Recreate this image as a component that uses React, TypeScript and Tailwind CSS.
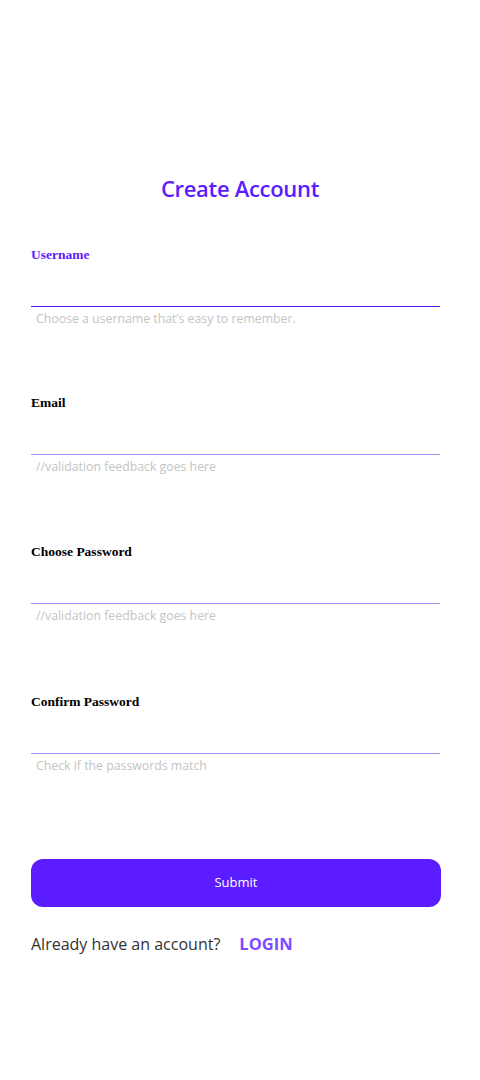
import React from 'react';

interface FieldProps {
  label: string;
  hint: string;
  active?: boolean;
  className?: string;
}

function Field({ label, hint, active, className = '' }: FieldProps) {
  return (
    <div className={`flex flex-col ${className}`}>
      <label
        className={`h-[18px] text-[13.5px] leading-[18px] font-['Liberation_Serif',serif] font-bold ${
          active ? 'text-[#5b1cff]' : 'text-black'
        }`}
      >
        {label}
      </label>
      <div className="h-[42px]" />
      <div className={`h-px w-[409px] ${active ? 'bg-[#5b1cff]' : 'bg-[#a98cf3]'}`} />
      <p className="mt-[3px] pl-[5px] text-[12.3px] leading-[18px] text-[#c4c4c4]">{hint}</p>
    </div>
  );
}

export default function App() {
  return (
    <div className="w-[480px] h-[1080px] bg-white font-['Open_Sans',sans-serif]">
      <div className="px-[31px] pt-[173px] flex flex-col">
        <h1 className="text-center text-[22px] leading-[30px] font-semibold text-[#5b1cff] tracking-[-0.3px]">
          Create Account
        </h1>

        <div className="mt-[43px] flex flex-col gap-[66px]">
          <Field label="Username" hint="Choose a username that’s easy to remember." active />
          <Field label="Email" hint="//validation feedback goes here" />
          <Field label="Choose Password" hint="//validation feedback goes here" className="mt-[1px]" />
          <Field label="Confirm Password" hint="Check if the passwords match" className="mt-[2px]" />
        </div>

        <button className="mt-[84px] h-[48px] w-[410px] rounded-[12px] bg-[#5b1cff] text-white text-[13px]">
          Submit
        </button>

        <div className="mt-[25px] flex items-center text-[16px] leading-[24px]">
          <span className="text-[#333]">Already have an account?</span>
          <span className="ml-[19px] text-[16.5px] font-bold text-[#7c4dff]">LOGIN</span>
        </div>
      </div>
    </div>
  );
}
